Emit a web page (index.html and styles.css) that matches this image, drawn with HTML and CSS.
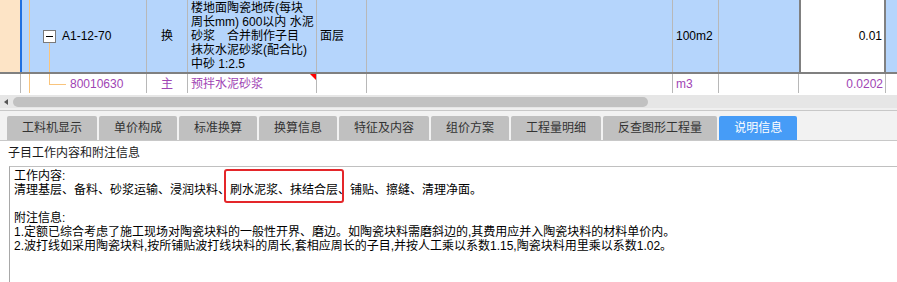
FILE: index.html
```html
<!DOCTYPE html>
<html lang="zh-CN">
<head>
  <meta charset="UTF-8" />
  <title>子目说明信息</title>
  <link rel="stylesheet" href="styles.css">
</head>
<body>
  <div class="grid">
    <div class="row row-main">
      <div class="cell c-flag"></div>
      <div class="cell c-code"><span class="toggle"></span><span>A1-12-70</span></div>
      <div class="cell c-type">换</div>
      <div class="cell c-name">楼地面陶瓷地砖(每块<br>周长mm) 600以内 水泥<br>砂浆　合并制作子目<br>抹灰水泥砂浆(配合比)<br>中砂 1:2.5</div>
      <div class="cell">面层</div>
      <div class="cell"></div>
      <div class="cell">100m2</div>
      <div class="cell c-blank"></div>
      <div class="cell c-qty c-active">0.01</div>
      <div class="cell c-end"></div>
    </div>
    <div class="row row-sub">
      <div class="cell c-flag"></div>
      <div class="cell c-code">80010630</div>
      <div class="cell c-type">主</div>
      <div class="cell c-name c-note">预拌水泥砂浆</div>
      <div class="cell"></div>
      <div class="cell"></div>
      <div class="cell">m3</div>
      <div class="cell"></div>
      <div class="cell c-qty">0.0202</div>
      <div class="cell c-end"></div>
    </div>
  </div>

  <div class="hscroll">
    <span class="arrow"></span>
    <div class="thumb"></div>
  </div>

  <div class="tabs">
    <div class="tab">工料机显示</div>
    <div class="tab">单价构成</div>
    <div class="tab">标准换算</div>
    <div class="tab">换算信息</div>
    <div class="tab">特征及内容</div>
    <div class="tab">组价方案</div>
    <div class="tab">工程量明细</div>
    <div class="tab">反查图形工程量</div>
    <div class="tab tab-active">说明信息</div>
  </div>

  <section class="panel">
    <div class="panel-title">子目工作内容和附注信息</div>
    <div class="panel-box">
      <div>工作内容:</div>
      <div>清理基层、备料、砂浆运输、浸润块料、刷水泥浆、抹结合层、铺贴、擦缝、清理净面。</div>
      <div class="blank"></div>
      <div>附注信息:</div>
      <div>1.定额已综合考虑了施工现场对陶瓷块料的一般性开界、磨边。如陶瓷块料需磨斜边的,其费用应并入陶瓷块料的材料单价内。</div>
      <div>2.波打线如采用陶瓷块料,按所铺贴波打线块料的周长,套相应周长的子目,并按人工乘以系数1.15,陶瓷块料用里乘以系数1.02。</div>
      <span class="mark"></span>
    </div>
  </section>
</body>
</html>
```

FILE: styles.css
```css
body {
  margin: 0;
  width: 897px;
  height: 282px;
  overflow: hidden;
  background: #fff;
  color: #000;
  font-family: "Liberation Sans", "Noto Sans CJK SC", sans-serif;
  font-size: 12px;
}

/* top grid */
.row {
  display: grid;
  grid-template-columns: 20px 127px 41px 129px 50px 306px 46px 80px 87px 11px;
}
.row-main {
  height: 72px;
  background: #b5d5fc;
  border-bottom: 2px solid #808080;
}
.row-sub {
  height: 19px;
  color: #a044b4;
}
.cell {
  display: flex;
  align-items: center;
  padding: 0 3px;
  border-right: 1px solid #b8b8b8;
  white-space: nowrap;
  overflow: hidden;
  line-height: 14px;
}
.c-flag {
  padding: 0;
  border-right: none;
}
.row-main .c-flag {
  background: #fde4c6;
}
.c-end {
  border-right: none;
}
.row-main .c-blank {
  border-right: none;
}
.c-code {
  padding-left: 21px;
}
.row-main .c-code {
  border-left: 2px solid #1f6fe0;
  background:
    linear-gradient(#f9c47c, #f9c47c) 7px 0 / 1px 100% no-repeat,
    linear-gradient(#f9c47c, #f9c47c) 27px 42px / 1px 30px no-repeat;
}
.row-sub .c-code {
  padding-left: 49px;
  border-left: 1px solid #b8b8b8;
  background:
    linear-gradient(#f9c47c, #f9c47c) 8px 0 / 1px 100% no-repeat,
    linear-gradient(#f9c47c, #f9c47c) 28px 0 / 1px 10px no-repeat,
    linear-gradient(#f9c47c, #f9c47c) 28px 10px / 17px 1px no-repeat;
}
.toggle {
  display: flex;
  align-items: center;
  justify-content: center;
  width: 11px;
  height: 11px;
  margin-right: 6px;
  border: 1px solid #7a7a7a;
  background: #fff;
}
.toggle::before {
  content: "";
  width: 7px;
  height: 1px;
  background: #000;
}
.c-type {
  justify-content: center;
}
.row-main .c-name {
  display: block;
  padding-top: 1px;
}
.c-note {
  position: relative;
}
.c-note::after {
  content: "";
  position: absolute;
  top: 0;
  right: 0;
  border-style: solid;
  border-width: 0 6px 6px 0;
  border-color: transparent #f00 transparent transparent;
}
.c-qty {
  justify-content: flex-end;
  padding-right: 2px;
}
.c-active {
  background: #fff;
  border-left: 2px solid #808080;
  border-right: 2px solid #808080;
}

/* horizontal scrollbar */
.hscroll {
  display: flex;
  align-items: center;
  height: 13px;
  margin-top: 2px;
  padding-left: 4px;
  background: #e6e6e6;
  border-bottom: 2px solid #f0f0f0;
}
.arrow {
  width: 0;
  height: 0;
  border-style: solid;
  border-width: 3px 4px 3px 0;
  border-color: transparent #555 transparent transparent;
}
.thumb {
  width: 635px;
  height: 10px;
  margin-left: 5px;
  border-radius: 5px;
  background: #c1c1c1;
}

/* tabs */
.tabs {
  display: flex;
  gap: 2px;
  padding: 5px 0 0 7px;
  background: #f2f2f2;
  border-top: 1px solid #c8c8c8;
  border-bottom: 1px solid #c8c8c8;
}
.tab {
  height: 24px;
  line-height: 24px;
  padding: 0 15px;
  background: #c0c0c0;
  color: #333;
  border-radius: 2px 2px 0 0;
}
.tab-active {
  background: #469cf7;
  color: #fff;
}

/* info panel */
.panel-title {
  height: 25px;
  line-height: 25px;
  padding-left: 8px;
  color: #1a1a1a;
}
.panel-box {
  position: relative;
  height: 120px;
  margin-left: 9px;
  padding: 2px 0 0 4px;
  border-top: 1px solid #c0c0c0;
  border-left: 1px solid #a8a8a8;
  line-height: 14px;
  white-space: nowrap;
}
.blank {
  height: 14px;
}
.mark {
  position: absolute;
  left: 214px;
  top: 2px;
  width: 116px;
  height: 30px;
  border: 2px solid #e4262a;
  border-radius: 3px;
}
```
